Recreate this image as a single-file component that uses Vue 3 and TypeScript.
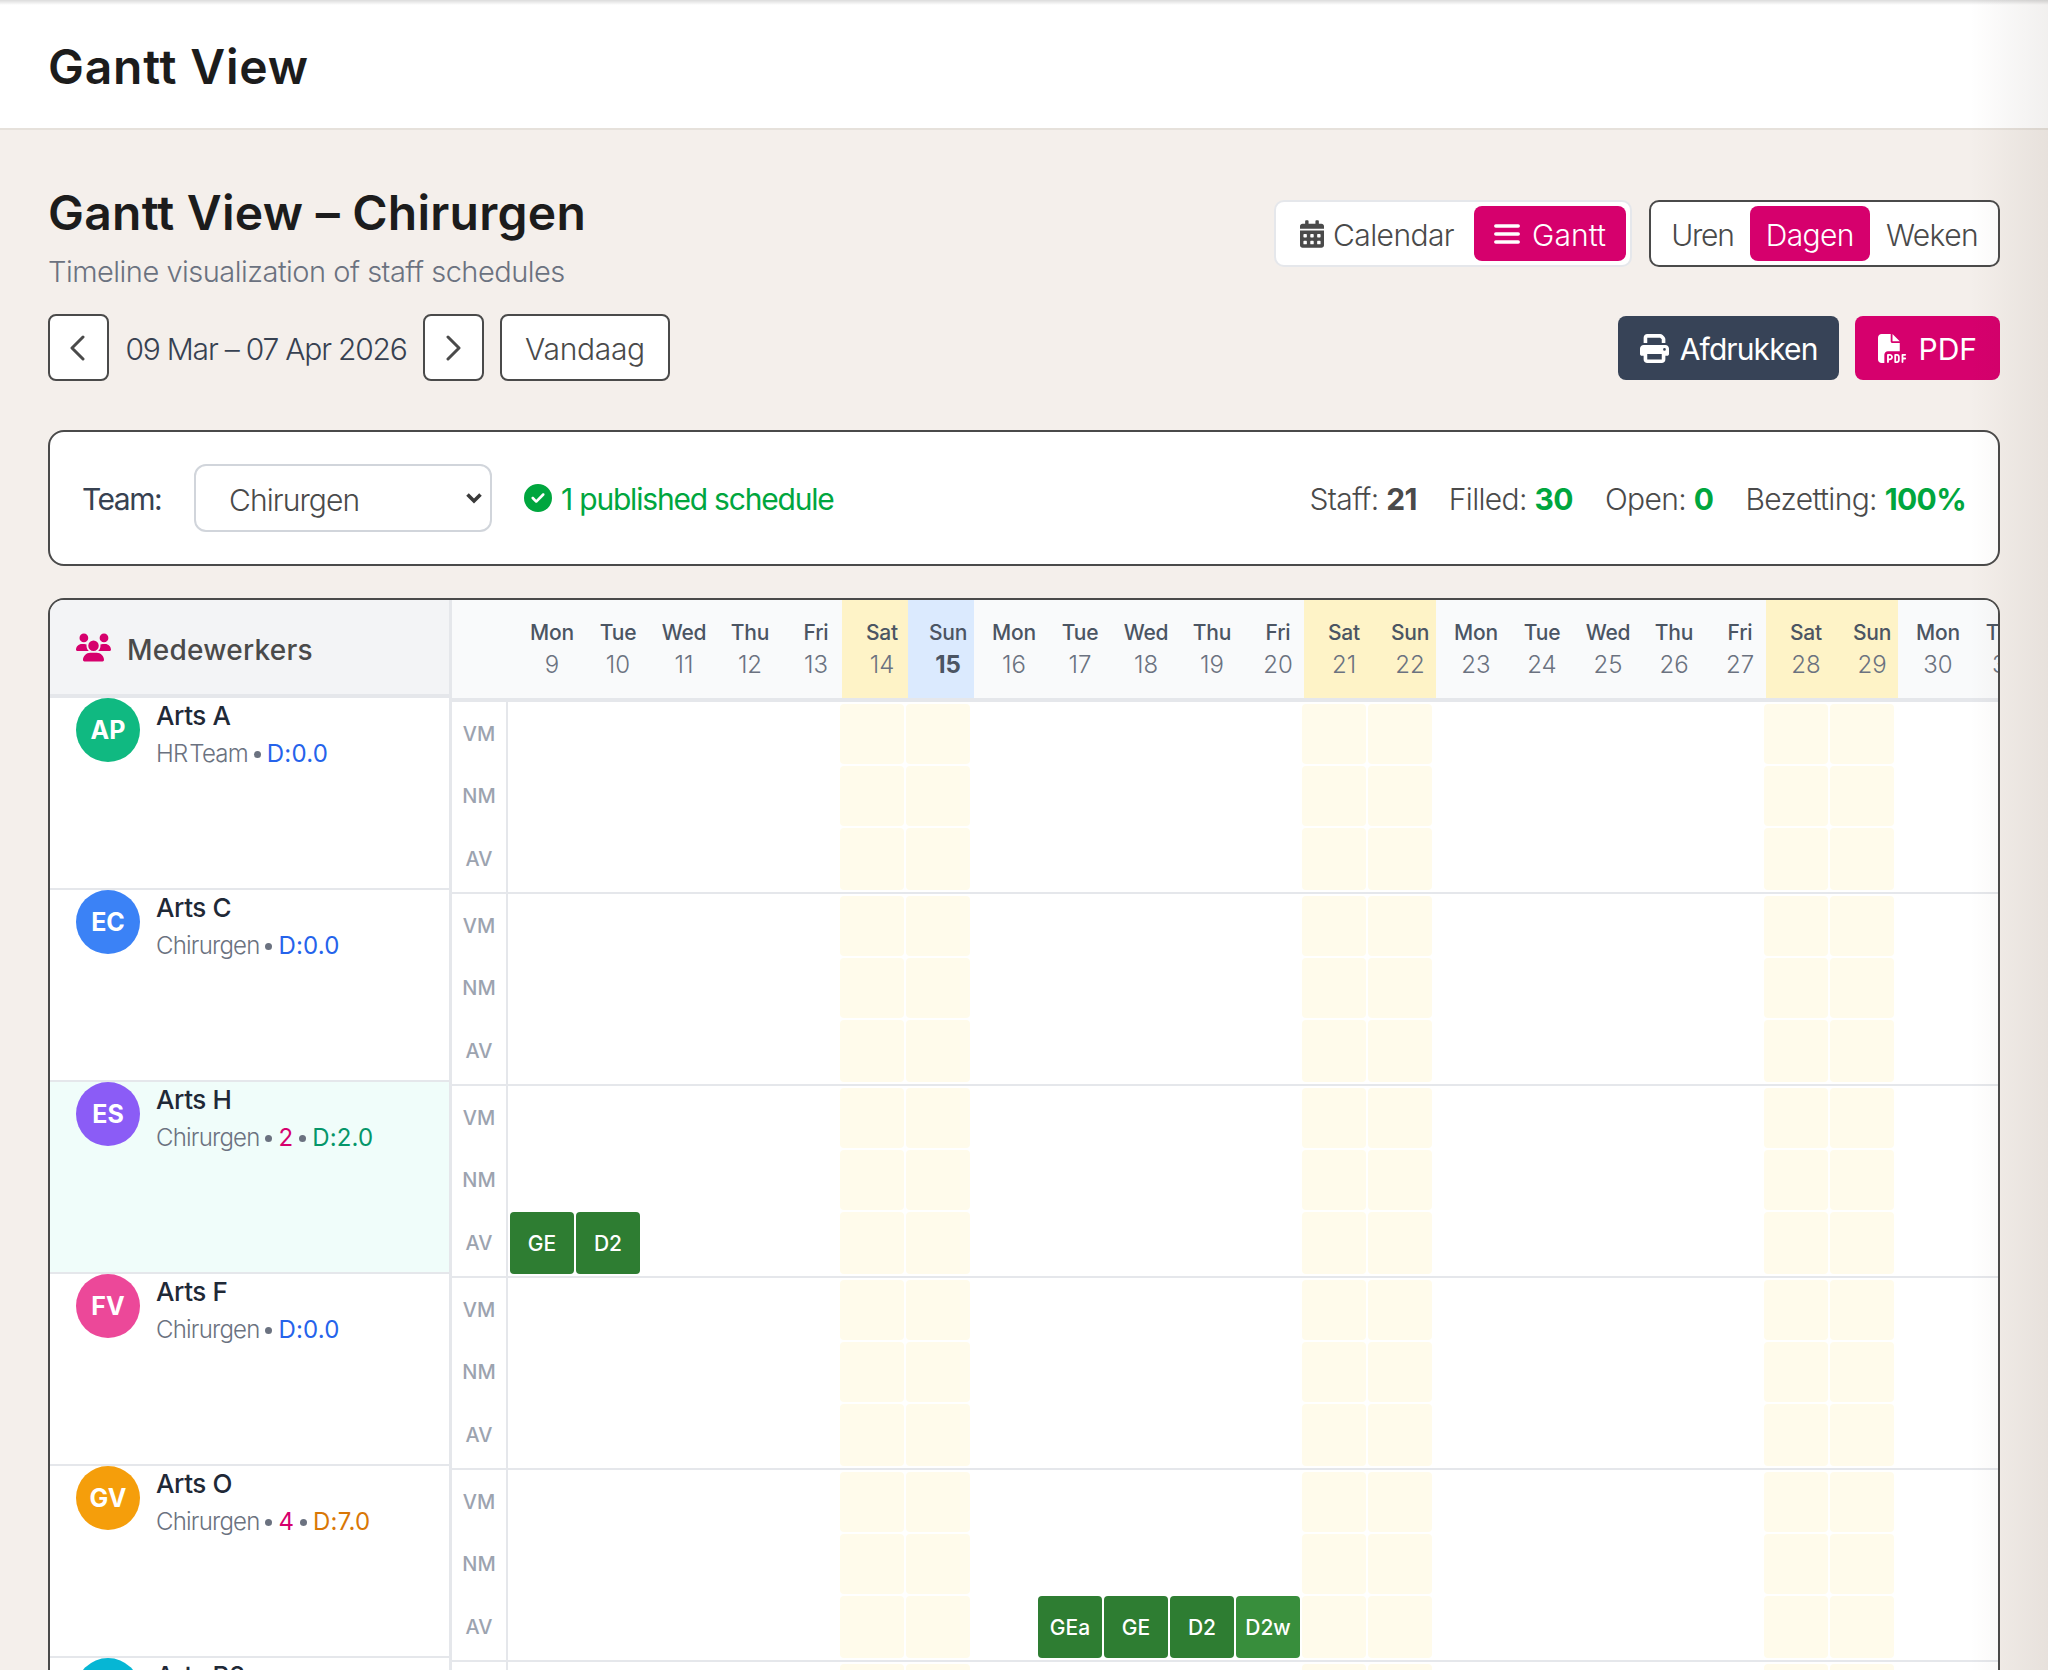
<template>
  <div class="page">
    <header class="topbar">
      <h1 class="topbar-title">Gantt View</h1>
    </header>

    <main class="content">
      <section class="top">
        <div class="top-left">
          <h2 class="page-title">Gantt View – Chirurgen</h2>
          <p class="page-sub">Timeline visualization of staff schedules</p>
          <div class="nav">
            <button class="nav-btn square">
              <svg class="chev-left" width="16" height="26" viewBox="0 0 16 26"><polyline points="14,2 3,13 14,24" fill="none" stroke="#4a4a4a" stroke-width="3" stroke-linecap="round" stroke-linejoin="round" /></svg>
            </button>
            <span class="range">09 Mar – 07 Apr 2026</span>
            <button class="nav-btn square">
              <svg width="16" height="26" viewBox="0 0 16 26"><polyline points="2,2 13,13 2,24" fill="none" stroke="#4a4a4a" stroke-width="3" stroke-linecap="round" stroke-linejoin="round" /></svg>
            </button>
            <button class="nav-btn nav-today">Vandaag</button>
          </div>
        </div>

        <div class="top-right">
          <div class="toggles">
            <div class="toggle light">
              <button class="toggle-btn icon-btn">
                <svg class="ico-cal" viewBox="0 0 448 512" fill="#4a4a4a"><path d="M0 464c0 26.5 21.5 48 48 48h352c26.5 0 48-21.5 48-48V192H0v272zm320-196c0-6.6 5.4-12 12-12h40c6.6 0 12 5.4 12 12v40c0 6.6-5.4 12-12 12h-40c-6.6 0-12-5.4-12-12v-40zm0 128c0-6.6 5.4-12 12-12h40c6.6 0 12 5.4 12 12v40c0 6.6-5.4 12-12 12h-40c-6.6 0-12-5.4-12-12v-40zM192 268c0-6.6 5.4-12 12-12h40c6.6 0 12 5.4 12 12v40c0 6.6-5.4 12-12 12h-40c-6.6 0-12-5.4-12-12v-40zm0 128c0-6.6 5.4-12 12-12h40c6.6 0 12 5.4 12 12v40c0 6.6-5.4 12-12 12h-40c-6.6 0-12-5.4-12-12v-40zM64 268c0-6.6 5.4-12 12-12h40c6.6 0 12 5.4 12 12v40c0 6.6-5.4 12-12 12H76c-6.6 0-12-5.4-12-12v-40zm0 128c0-6.6 5.4-12 12-12h40c6.6 0 12 5.4 12 12v40c0 6.6-5.4 12-12 12H76c-6.6 0-12-5.4-12-12v-40zM400 64h-48V16c0-8.8-7.2-16-16-16h-32c-8.8 0-16 7.2-16 16v48H160V16c0-8.8-7.2-16-16-16h-32c-8.8 0-16 7.2-16 16v48H48C21.5 64 0 85.5 0 112v48h448v-48c0-26.5-21.5-48-48-48z" /></svg>
                Calendar
              </button>
              <button class="toggle-btn icon-btn active">
                <svg class="ico-bars" viewBox="0 0 26 22"><path d="M1.8 3h22.4M1.8 11h22.4M1.8 19h22.4" stroke="#fff" stroke-width="3.5" stroke-linecap="round" fill="none" /></svg>
                Gantt
              </button>
            </div>
            <div class="toggle dark">
              <button class="toggle-btn">Uren</button>
              <button class="toggle-btn active">Dagen</button>
              <button class="toggle-btn">Weken</button>
            </div>
          </div>
          <div class="actions">
            <button class="action print">
              <svg class="ico-act" viewBox="0 0 512 512" fill="#fff"><path d="M128 0C92.7 0 64 28.7 64 64v96h64V64H354.7L384 93.3V160h64V93.3c0-17-6.7-33.3-18.7-45.3L400 18.7C388 6.7 371.7 0 354.7 0H128zM384 352v32 64H128V384 368 352H384zm64 32h32c17.7 0 32-14.3 32-32V256c0-35.3-28.7-64-64-64H64c-35.3 0-64 28.7-64 64v96c0 17.7 14.3 32 32 32H64v64c0 35.3 28.7 64 64 64H384c35.3 0 64-28.7 64-64V384zM432 248a24 24 0 1 1 0 48 24 24 0 1 1 0-48z" /></svg>
              <span>Afdrukken</span>
            </button>
            <button class="action pdf">
              <svg class="ico-act" viewBox="0 0 512 512" fill="#fff"><path d="M0 64C0 28.7 28.7 0 64 0H224V128c0 17.7 14.3 32 32 32H384V304H176c-35.3 0-64 28.7-64 64V512H64c-35.3 0-64-28.7-64-64V64zm384 64H256V0L384 128zM176 352h32c30.9 0 56 25.1 56 56s-25.1 56-56 56H192v32c0 8.8-7.2 16-16 16s-16-7.2-16-16V448 368c0-8.8 7.2-16 16-16zm32 80c13.3 0 24-10.7 24-24s-10.7-24-24-24H192v48h16zm96-80h32c26.5 0 48 21.5 48 48v64c0 26.5-21.5 48-48 48H304c-8.8 0-16-7.2-16-16V368c0-8.8 7.2-16 16-16zm32 128c8.8 0 16-7.2 16-16V400c0-8.8-7.2-16-16-16H320v96h16zm80-112c0-8.8 7.2-16 16-16h48c8.8 0 16 7.2 16 16s-7.2 16-16 16H448v32h32c8.8 0 16 7.2 16 16s-7.2 16-16 16H448v48c0 8.8-7.2 16-16 16s-16-7.2-16-16V432 368z" /></svg>
              <span>PDF</span>
            </button>
          </div>
        </div>
      </section>

      <section class="filter">
        <label class="team-label">Team:</label>
        <div class="select-wrap">
          <select class="team-select">
            <option>Chirurgen</option>
          </select>
          <svg class="select-arrow" width="18" height="12" viewBox="0 0 18 12"><polyline points="2.5,2.5 9,9 15.5,2.5" fill="none" stroke="#3a3a3a" stroke-width="3.6" /></svg>
        </div>
        <svg class="ico-check" viewBox="0 0 512 512" fill="#00a63e"><path d="M256 512A256 256 0 1 0 256 0a256 256 0 1 0 0 512zM369 209L241 337c-9.4 9.4-24.6 9.4-33.9 0l-64-64c-9.4-9.4-9.4-24.6 0-33.9s24.6-9.4 33.9 0l47 47L335 175c9.4-9.4 24.6-9.4 33.9 0s9.4 24.6 0 33.9z" /></svg>
        <span class="published">1 published schedule</span>
        <div class="stats">
          <span>Staff: <b>21</b></span>
          <span>Filled: <b class="green">30</b></span>
          <span>Open: <b class="green">0</b></span>
          <span>Bezetting: <b class="green">100%</b></span>
        </div>
      </section>

      <section class="gantt">
        <div class="staff-col">
          <div class="staff-head">
            <svg class="ico-users" viewBox="0 0 640 512" fill="#d6006d"><path d="M144 0a80 80 0 1 1 0 160A80 80 0 1 1 144 0zM512 0a80 80 0 1 1 0 160A80 80 0 1 1 512 0zM0 298.7C0 239.8 47.8 192 106.7 192h42.7c15.9 0 31 3.5 44.6 9.7c-1.3 7.2-1.9 14.7-1.9 22.3c0 38.2 16.8 72.5 43.3 96c-.2 0-.4 0-.7 0H21.3C9.6 320 0 310.4 0 298.7zM405.3 320c-.2 0-.4 0-.7 0c26.6-23.5 43.3-57.8 43.3-96c0-7.6-.7-15-1.9-22.3c13.6-6.3 28.7-9.7 44.6-9.7h42.7C592.2 192 640 239.8 640 298.7c0 11.8-9.6 21.3-21.3 21.3H405.3zM224 224a96 96 0 1 1 192 0 96 96 0 1 1 -192 0zM128 485.3C128 411.7 187.7 352 261.3 352H378.7C452.3 352 512 411.7 512 485.3c0 14.7-11.9 26.7-26.7 26.7H154.7c-14.7 0-26.7-11.9-26.7-26.7z" /></svg>
            <span>Medewerkers</span>
          </div>
          <div v-for="s in staff" :key="s.name" class="staff-row" :class="{ hl: s.highlight }">
            <div class="avatar" :style="{ background: s.color }">{{ s.initials }}</div>
            <div class="staff-info">
              <div class="staff-name">{{ s.name }}</div>
              <div class="staff-meta">
                <span class="staff-team">{{ s.team }}</span>
                <span class="dot"></span>
                <template v-if="s.count">
                  <span class="count">{{ s.count }}</span>
                  <span class="dot"></span>
                </template>
                <span class="duty" :style="{ color: s.dutyColor }">{{ s.duty }}</span>
              </div>
            </div>
          </div>
        </div>

        <div class="timeline">
          <div class="days">
            <div
              v-for="d in days"
              :key="d.label + d.num"
              class="day"
              :class="{ weekend: d.weekend, today: d.today }"
            >
              <span class="day-name">{{ d.label }}</span>
              <span class="day-num">{{ d.num }}</span>
            </div>
          </div>
          <div v-for="s in staff" :key="s.name" class="grid-row">
            <div class="shifts">
              <span v-for="p in parts" :key="p">{{ p }}</span>
            </div>
            <div class="cells">
              <template v-for="p in parts" :key="p">
                <div
                  v-for="(d, i) in days"
                  :key="i"
                  class="cell"
                  :class="{ weekend: d.weekend, chip: chipAt(s, p, i), lighter: chipAt(s, p, i) === 'D2w' }"
                >{{ chipAt(s, p, i) }}</div>
              </template>
            </div>
          </div>
        </div>
      </section>
    </main>

    <div class="edge-right"></div>
    <div class="edge-top"></div>
  </div>
</template>

<script setup lang="ts">
interface Staff {
  name: string
  initials: string
  color: string
  team: string
  count?: number
  duty: string
  dutyColor: string
  highlight?: boolean
  chips?: Record<number, string>
}

const blue = '#2563eb'

const staff: Staff[] = [
  { name: 'Arts A', initials: 'AP', color: '#10b981', team: 'HR Team', duty: 'D:0.0', dutyColor: blue },
  { name: 'Arts C', initials: 'EC', color: '#3b82f6', team: 'Chirurgen', duty: 'D:0.0', dutyColor: blue },
  {
    name: 'Arts H',
    initials: 'ES',
    color: '#8b5cf6',
    team: 'Chirurgen',
    count: 2,
    duty: 'D:2.0',
    dutyColor: '#059669',
    highlight: true,
    chips: { 0: 'GE', 1: 'D2' },
  },
  { name: 'Arts F', initials: 'FV', color: '#ec4899', team: 'Chirurgen', duty: 'D:0.0', dutyColor: blue },
  {
    name: 'Arts O',
    initials: 'GV',
    color: '#f59e0b',
    team: 'Chirurgen',
    count: 4,
    duty: 'D:7.0',
    dutyColor: '#d97706',
    chips: { 8: 'GEa', 9: 'GE', 10: 'D2', 11: 'D2w' },
  },
  { name: 'Arts B2', initials: 'IB', color: '#06b6d4', team: 'Chirurgen', duty: 'D:0.0', dutyColor: blue },
]

const parts = ['VM', 'NM', 'AV']
const names = ['Mon', 'Tue', 'Wed', 'Thu', 'Fri', 'Sat', 'Sun']

// 30 days from 9 March, March has 31
const days = Array.from({ length: 30 }, (_, i) => {
  const n = 9 + i
  return {
    label: names[i % 7],
    num: n > 31 ? n - 31 : n,
    weekend: i % 7 >= 5,
    today: i === 6,
  }
})

const chipAt = (s: Staff, part: string, i: number) => {
  if (part !== 'AV' || !s.chips) return ''
  return s.chips[i] || ''
}
</script>

<style>
html,
body {
  margin: 0;
  background: #f4efeb;
}
</style>

<style scoped>
.page {
  position: relative;
  height: 1670px;
  overflow: hidden;
  background: #f4efeb;
  font-family: Inter, "Open Sans", sans-serif;
  color: #4a4a4a;
}

button {
  font-family: inherit;
  cursor: pointer;
}

.topbar {
  display: flex;
  align-items: center;
  box-sizing: border-box;
  height: 130px;
  padding: 5px 48px 0;
  background: #fff;
  border-bottom: 2px solid #e6e1db;
}

.topbar-title,
.page-title {
  margin: 0;
  font-size: 48px;
  line-height: 64px;
  font-weight: 600;
  letter-spacing: 0.8px;
  color: #1c1c1c;
}

.page-title {
  padding-top: 1px;
  letter-spacing: 0.25px;
}

.content {
  padding: 50px 48px 0;
}

.top {
  display: flex;
  justify-content: space-between;
}

.page-sub {
  margin: 5px 0 0;
  font-size: 29px;
  line-height: 44px;
  font-weight: 300;
  letter-spacing: -0.5px;
  color: #6b7280;
}

.nav {
  display: flex;
  align-items: center;
  margin-top: 20px;
}

.nav-btn {
  display: flex;
  align-items: center;
  justify-content: center;
  height: 67px;
  background: #fff;
  border: 2px solid #4a4a4a;
  border-radius: 8px;
  padding: 0;
  font-size: 30px;
  font-weight: 300;
  color: #4a4a4a;
}

.square {
  width: 61px;
}

.chev-left {
  margin-right: 3px;
}

.range {
  width: 314px;
  padding-top: 2px;
  text-align: center;
  font-size: 30px;
  font-weight: 300;
  letter-spacing: -1.2px;
  color: #374151;
}

.nav-today {
  width: 170px;
  margin-left: 16px;
  padding-top: 2px;
  letter-spacing: -0.3px;
}

.top-right {
  display: flex;
  flex-direction: column;
  align-items: flex-end;
  padding-top: 20px;
}

.toggles {
  display: flex;
  gap: 17px;
}

.toggle {
  display: flex;
  height: 67px;
  box-sizing: border-box;
  padding: 4px;
  background: #fff;
  border-radius: 10px;
}

.toggle.light {
  border: 2px solid #e5e7eb;
}

.toggle.dark {
  border: 2px solid #4a4a4a;
}

.toggle-btn {
  display: flex;
  align-items: center;
  padding: 2px 16px 0;
  background: none;
  border: 0;
  border-radius: 8px;
  font-size: 30px;
  font-weight: 300;
  letter-spacing: -0.6px;
  color: #4a4a4a;
}

.toggle.dark .toggle-btn:first-child {
  letter-spacing: -1.2px;
}

.toggle-btn.icon-btn {
  padding: 2px 20px 0;
  gap: 9px;
}

.toggle-btn.icon-btn.active {
  letter-spacing: 0.1px;
}

.toggle-btn.active {
  background: #d6006d;
  color: #fff;
}

.ico-cal {
  width: 24px;
  height: 28px;
  margin-top: -2px;
}

.ico-bars {
  width: 26px;
  height: 22px;
  margin: -2px 3px 0 0;
}

.actions {
  display: flex;
  gap: 16px;
  margin-top: 49px;
}

.action {
  display: flex;
  align-items: center;
  gap: 11px;
  height: 64px;
  padding: 0 22px;
  border: 0;
  border-radius: 8px;
  font-size: 30px;
  font-weight: 400;
  color: #fff;
}

.action span {
  padding-top: 2px;
}

.action.print {
  background: #374357;
}

.action.print span {
  letter-spacing: -0.9px;
}

.action.pdf {
  padding: 0 23px;
  background: #d6006d;
}

.ico-act {
  width: 29px;
  height: 29px;
}

.filter {
  display: flex;
  align-items: center;
  box-sizing: border-box;
  height: 136px;
  margin-top: 49px;
  padding: 0 32px;
  background: #fff;
  border: 2px solid #4a4a4a;
  border-radius: 16px;
  font-size: 30px;
  font-weight: 300;
}

.team-label {
  width: 112px;
  padding-top: 2px;
  font-weight: 400;
  letter-spacing: -1.5px;
  color: #374151;
}

.select-wrap {
  position: relative;
  width: 298px;
  height: 68px;
}

.team-select {
  appearance: none;
  width: 100%;
  height: 100%;
  box-sizing: border-box;
  padding: 3px 0 0 33px;
  background: #fff;
  border: 2px solid #d1d5db;
  border-radius: 12px;
  font-family: inherit;
  font-size: 30px;
  font-weight: 300;
  letter-spacing: -0.9px;
  color: #4a4a4a;
}

.select-arrow {
  position: absolute;
  top: 28px;
  right: 9px;
  pointer-events: none;
}

.ico-check {
  width: 28px;
  height: 28px;
  margin-left: 32px;
}

.published {
  margin-left: 9px;
  padding-top: 2px;
  letter-spacing: -1.2px;
  font-weight: 400;
  color: #00a63e;
}

.stats {
  display: flex;
  gap: 32px;
  margin-left: auto;
  padding-top: 2px;
  letter-spacing: -0.65px;
}

.stats b {
  font-weight: 700;
}

.green {
  color: #00a63e;
}

.gantt {
  display: flex;
  height: 1100px;
  margin-top: 32px;
  background: #fff;
  border: 2px solid #4a4a4a;
  border-radius: 16px;
  overflow: hidden;
}

.staff-col {
  flex: none;
  width: 399px;
  border-right: 3px solid #e5e7eb;
}

.staff-head {
  display: flex;
  align-items: center;
  gap: 16px;
  box-sizing: border-box;
  height: 98px;
  padding-left: 26px;
  background: #f3f4f6;
  border-bottom: 4px solid #e5e7eb;
  font-size: 28px;
  font-weight: 500;
}

.staff-head span {
  padding-top: 5px;
  letter-spacing: 0.25px;
}

.ico-users {
  width: 35px;
  height: 29px;
}

.staff-row {
  display: flex;
  gap: 16px;
  box-sizing: border-box;
  height: 192px;
  padding-left: 26px;
  border-bottom: 2px solid #e5e7eb;
}

.staff-row.hl {
  background: #f0fdfa;
}

.avatar {
  display: flex;
  align-items: center;
  justify-content: center;
  flex: none;
  width: 64px;
  height: 64px;
  border-radius: 50%;
  font-size: 25px;
  font-weight: 700;
  color: #fff;
}

.staff-name {
  font-size: 26px;
  line-height: 36px;
  font-weight: 500;
  letter-spacing: -0.4px;
  color: #1f2937;
}

.staff-meta {
  display: flex;
  align-items: center;
  gap: 6px;
  margin-top: 2px;
  font-size: 24px;
  line-height: 36px;
  font-weight: 300;
  color: #6b7280;
}

.staff-team {
  letter-spacing: -0.8px;
  word-spacing: -4px;
}

.duty {
  font-weight: 400;
  letter-spacing: 0.2px;
}

.dot {
  width: 7px;
  height: 7px;
  border-radius: 50%;
  background: #6b7280;
}

.count {
  font-weight: 400;
  color: #d6006d;
}

.timeline {
  flex: 1;
  min-width: 0;
  overflow: hidden;
}

.days {
  display: flex;
  box-sizing: border-box;
  width: 2040px;
  height: 102px;
  padding-left: 60px;
  background: #f9fafb;
  border-bottom: 4px solid #e5e7eb;
}

.day {
  display: flex;
  flex-direction: column;
  align-items: center;
  flex: none;
  box-sizing: border-box;
  width: 66px;
  padding: 18px 0 0 14px;
}

.day.weekend {
  background: #fef3c7;
}

.day.today {
  background: #dbeafe;
}

.day-name {
  font-size: 21px;
  line-height: 30px;
  font-weight: 500;
  letter-spacing: -0.2px;
  color: #4b5563;
}

.day-num {
  margin-top: 1px;
  font-size: 24px;
  line-height: 32px;
  font-weight: 300;
  color: #6b7280;
}

.today .day-num {
  font-weight: 700;
  color: #4b5563;
}

.grid-row {
  display: flex;
  box-sizing: border-box;
  width: 2100px;
  height: 192px;
  border-bottom: 2px solid #e5e7eb;
}

.shifts {
  display: grid;
  grid-template-rows: 60px 60px 62px;
  gap: 2px;
  flex: none;
  box-sizing: border-box;
  width: 56px;
  padding-top: 2px;
  border-right: 2px solid #e5e7eb;
  font-size: 20px;
  font-weight: 500;
  color: #9ca3af;
}

.shifts span {
  align-self: center;
  text-align: center;
}

.cells {
  display: grid;
  grid-template-columns: repeat(30, 64px);
  grid-template-rows: 60px 60px 62px;
  gap: 2px;
  padding: 2px 0 0 2px;
}

.cell {
  display: flex;
  align-items: center;
  justify-content: center;
  border-radius: 4px;
  font-size: 21px;
  font-weight: 500;
  color: #fff;
}

.cell.weekend {
  background: #fffbeb;
}

.cell.chip {
  background: #2e7d32;
}

.cell.lighter {
  background: #388e3c;
}

.edge-right {
  position: absolute;
  top: 0;
  right: 0;
  bottom: 0;
  width: 78px;
  background: linear-gradient(to right, rgba(0, 0, 0, 0), rgba(60, 40, 20, 0.07));
  pointer-events: none;
}

.edge-top {
  position: absolute;
  top: 0;
  left: 0;
  right: 0;
  height: 5px;
  background: linear-gradient(to bottom, rgba(0, 0, 0, 0.14), rgba(0, 0, 0, 0));
  pointer-events: none;
}
</style>
